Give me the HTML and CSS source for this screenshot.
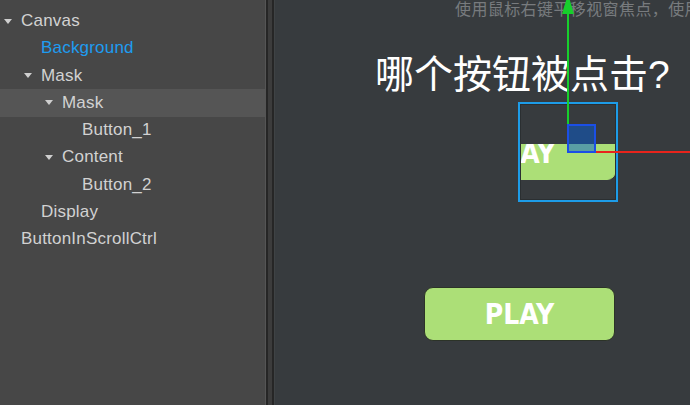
FILE: index.html
```html
<!DOCTYPE html>
<html lang="zh">

<head>
  <meta charset="UTF-8">
  <meta name="viewport" content="width=device-width, initial-scale=1.0">
  <title>场景编辑器</title>
  <link rel="stylesheet" href="styles.css">
</head>

<body>

  <div id="hierarchy">
    <div class="node lv0"><span class="fold"></span>Canvas</div>
    <div class="node lv1 active"><span class="leaf"></span>Background</div>
    <div class="node lv1"><span class="fold"></span>Mask</div>
    <div class="node lv2 selected"><span class="fold"></span>Mask</div>
    <div class="node lv3"><span class="leaf"></span>Button_1</div>
    <div class="node lv2"><span class="fold"></span>Content</div>
    <div class="node lv3"><span class="leaf"></span>Button_2</div>
    <div class="node lv1"><span class="leaf"></span>Display</div>
    <div class="node lv0"><span class="leaf"></span>ButtonInScrollCtrl</div>
  </div>

  <div class="splitter"></div>

  <div id="scene">
    <div class="hint">使用鼠标右键平移视窗焦点，使用滚轮缩放视图</div>
    <div class="title">哪个按钮被点击?</div>

    <!-- 遮罩里的按钮 -->
    <div class="mask-clip">
      <div class="play-btn clipped">PLAY</div>
    </div>
    <div class="play-btn lower">PLAY</div>

    <!-- 选中框和坐标轴 -->
    <div class="select-box"></div>
    <div class="axis-y"></div>
    <svg class="axis-arrow" width="14" height="16" viewBox="0 0 14 16">
      <polygon points="7,-6 13,14 1,14" fill="#17cf2c" />
    </svg>
    <div class="axis-x"></div>
    <div class="handle"></div>
  </div>

</body>

</html>
```

FILE: styles.css
```css
body {
  margin: 0;
  width: 690px;
  height: 405px;
  overflow: hidden;
  display: flex;
  background-color: #373b3e;
  font-family: "Liberation Sans", "Noto Sans CJK SC", sans-serif;
}

#hierarchy {
  width: 265px;
  padding-top: 7.5px;
  background-color: #474747;
  border-right: 1px solid #555;
}

.node {
  height: 27.25px;
  display: flex;
  align-items: center;
  font-size: 17px;
  letter-spacing: 0.2px;
  color: #d2d2d2;
  white-space: nowrap;
}

.node.selected {
  background-color: #555;
}

.node.active {
  color: #1e9cf0;
}

.lv0 { padding-left: 4px; }
.lv1 { padding-left: 24px; }
.lv2 { padding-left: 45px; }
.lv3 { padding-left: 65px; }

.fold,
.leaf {
  width: 17px;
  flex-shrink: 0;
}

.fold::before {
  content: "";
  display: block;
  width: 0;
  height: 0;
  border-left: 4px solid transparent;
  border-right: 4px solid transparent;
  border-top: 5px solid #cfcfcf;
}

.splitter {
  width: 9px;
  background: linear-gradient(to right,
      #262626 0, #262626 2px,
      #3c3c3c 2px, #3c3c3c 6px,
      #262626 6px, #262626 8px,
      #3f4345 8px);
}

#scene {
  flex: 1;
  position: relative;
  overflow: hidden;
}

.hint {
  position: absolute;
  left: 180px;
  top: 0;
  font-size: 16px;
  line-height: 20px;
  letter-spacing: 0.4px;
  color: #787b7e;
  white-space: nowrap;
}

.title {
  position: absolute;
  left: 100px;
  top: 50px;
  font-size: 39px;
  line-height: 50px;
  color: #fff;
  white-space: nowrap;
}

.play-btn {
  width: 191px;
  height: 54px;
  box-sizing: border-box;
  border: 1px solid #2c3328;
  border-radius: 9px;
  background-color: #acdf77;
  color: #fff;
  font-family: "DejaVu Sans Condensed", "Liberation Sans", sans-serif;
  font-weight: bold;
  font-size: 28px;
  display: flex;
  align-items: center;
  justify-content: center;
}

.lower {
  position: absolute;
  left: 149px;
  top: 287px;
}

.mask-clip {
  position: absolute;
  left: 245px;
  top: 144px;
  width: 96px;
  height: 56px;
  overflow: hidden;
}

.clipped {
  margin-left: -95px;
  margin-top: -18px;
  border-color: #acdf77;
}

.select-box {
  position: absolute;
  left: 243px;
  top: 102px;
  width: 96px;
  height: 96px;
  border: 2px solid #1d9ce8;
  box-shadow: inset 0 0 0 1px #2b2f31;
}

.axis-y {
  position: absolute;
  left: 292px;
  top: 10px;
  width: 2px;
  height: 114px;
  background-color: #17cf2c;
}

.axis-arrow {
  position: absolute;
  left: 286px;
  top: 0;
}

.axis-x {
  position: absolute;
  left: 321px;
  top: 151px;
  width: 100px;
  height: 2px;
  background-color: #e8241c;
}

.handle {
  position: absolute;
  left: 292px;
  top: 124px;
  width: 25px;
  height: 25px;
  border: 2px solid #1b4fe6;
  background-color: rgba(7, 93, 210, 0.5);
}
```
